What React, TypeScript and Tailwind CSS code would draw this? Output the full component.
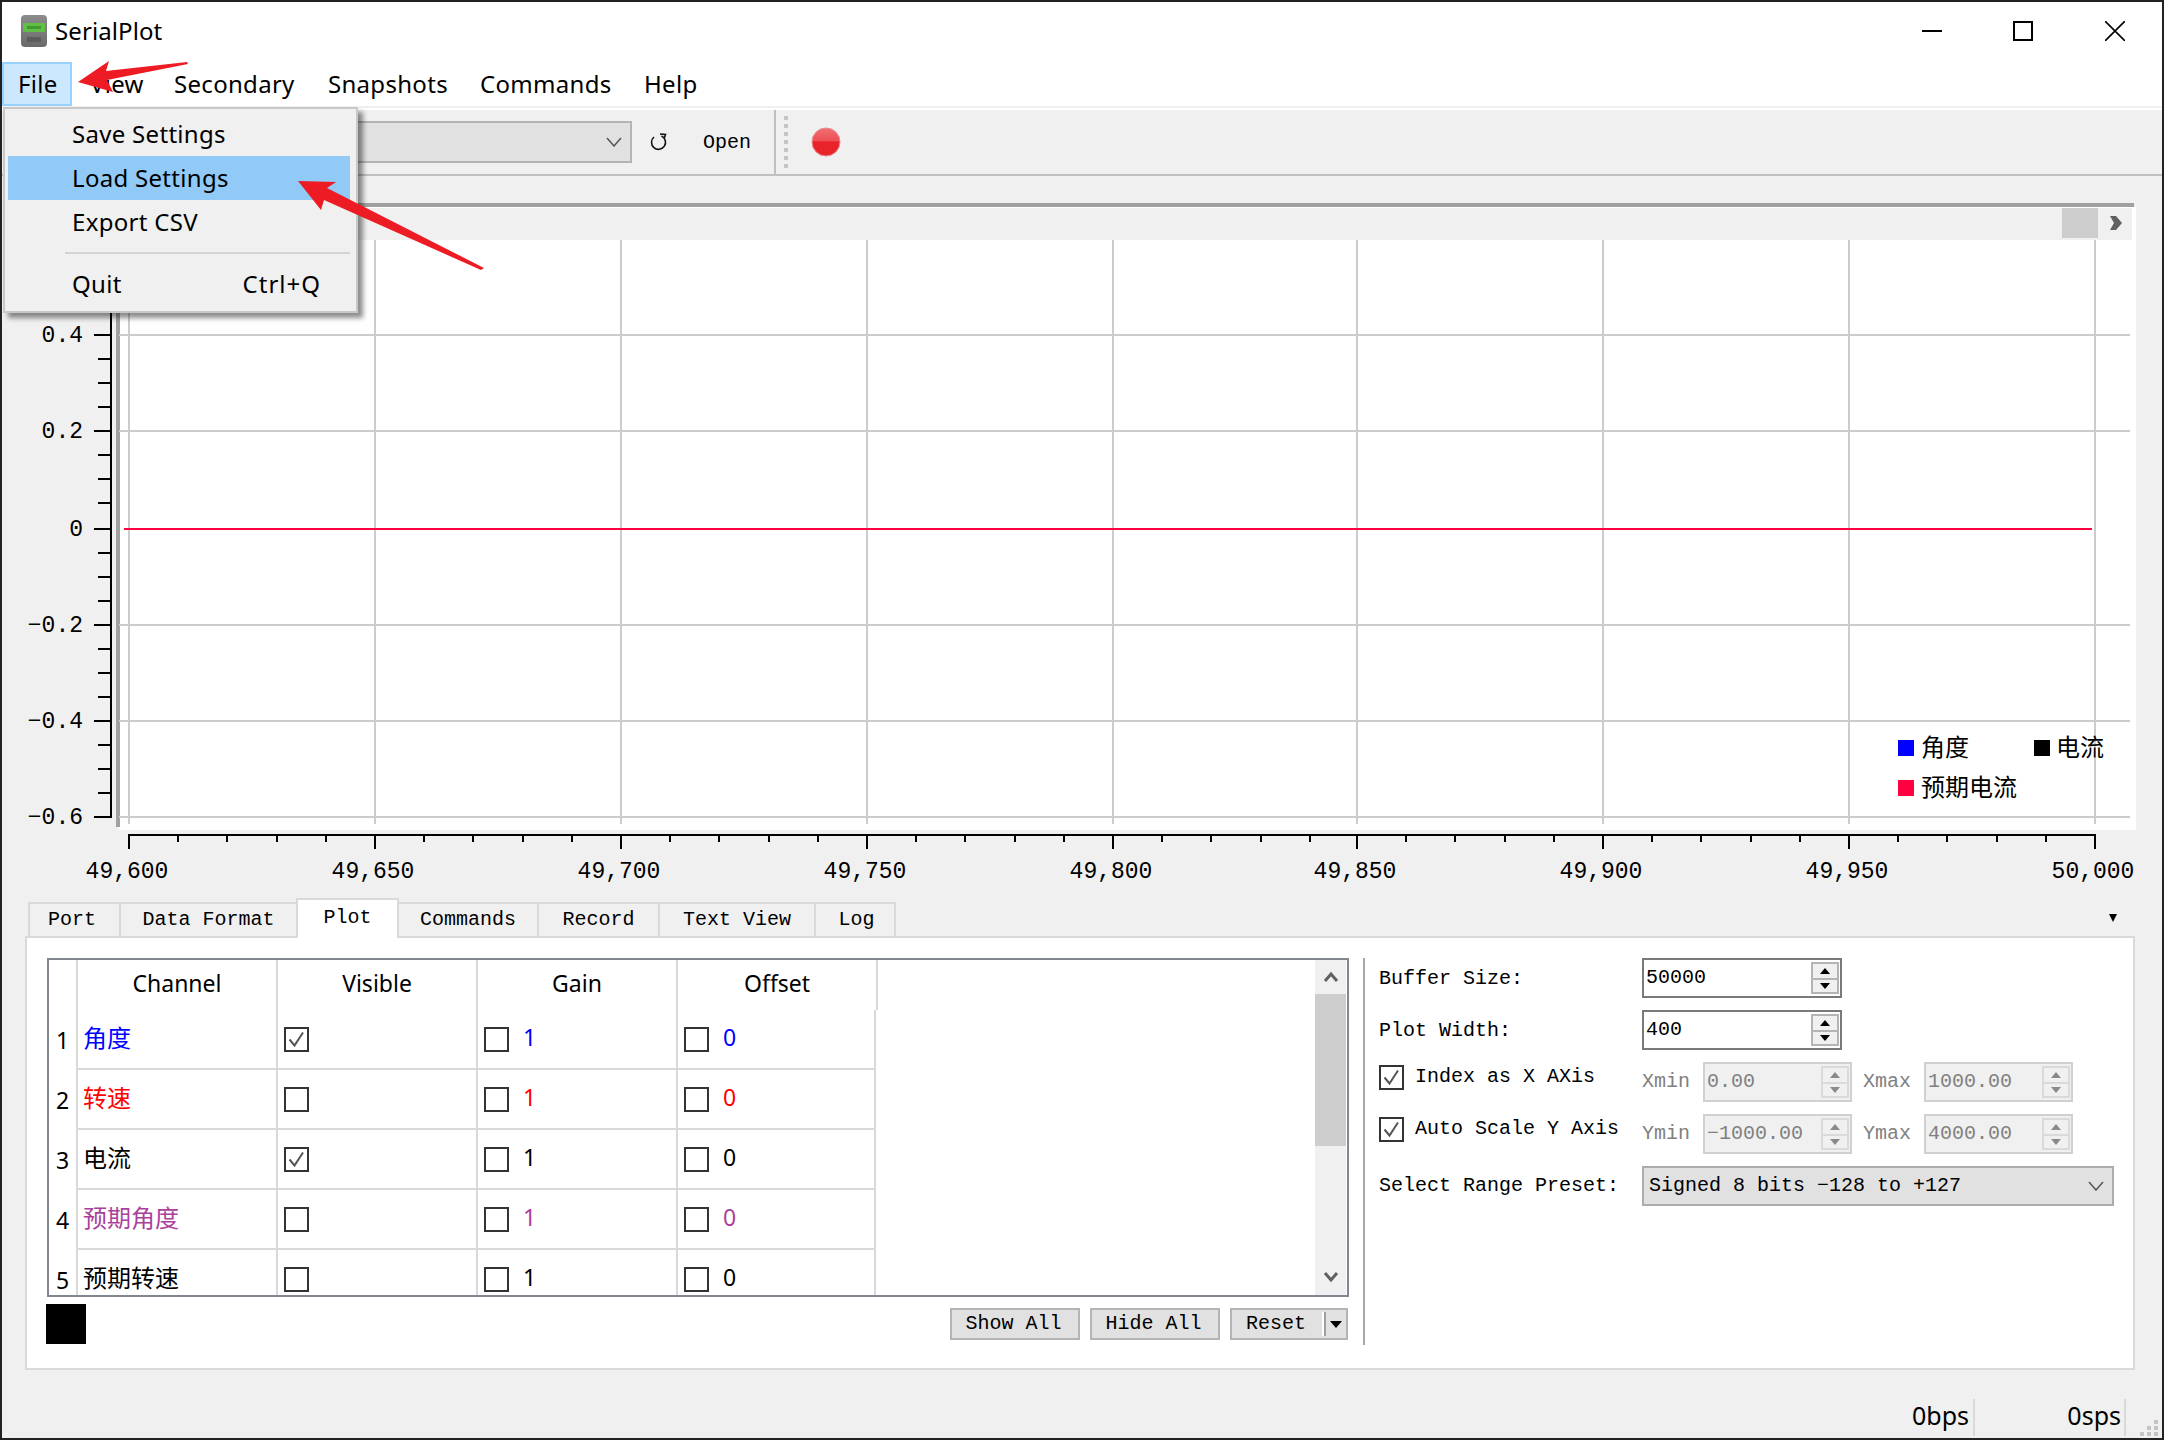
const mono = "font-['Liberation_Mono','Noto_Sans_CJK_SC',monospace] text-[20px]";

const xTicks = [129, 375, 621, 867, 1113, 1357, 1603, 1849, 2095];
const xLabels = ["49,600", "49,650", "49,700", "49,750", "49,800", "49,850", "49,900", "49,950", "50,000"];
const yMajor = [
	{ y: 335, t: "0.4" },
	{ y: 431, t: "0.2" },
	{ y: 529, t: "0" },
	{ y: 625, t: "−0.2" },
	{ y: 721, t: "−0.4" },
	{ y: 817, t: "−0.6" },
];

const channels = [
	{ n: 1, name: "角度", color: "text-[#0000ff]", on: true },
	{ n: 2, name: "转速", color: "text-[#ff0000]", on: false },
	{ n: 3, name: "电流", color: "text-black", on: true },
	{ n: 4, name: "预期角度", color: "text-[#aa3f9c]", on: false },
	{ n: 5, name: "预期转速", color: "text-black", on: false },
];

function Check({ on }: { on?: boolean }) {
	return (
		<span className="flex h-[25px] w-[25px] shrink-0 items-center justify-center border-2 border-[#333333] bg-white">
			{on && (
				<svg width="19" height="19" viewBox="0 0 19 19" fill="none">
					<path d="M2.5 9.5 L7.5 15.5 L16 2.5" stroke="#555555" strokeWidth="2" />
				</svg>
			)}
		</span>
	);
}

function Spin({ value, width, off }: { value: string; width: string; off?: boolean }) {
	const arrow = off ? "#8a8a8a" : "#000000";
	return (
		<div
			className={`flex h-10 items-center justify-between border-2 pl-[2px] pr-[1px] ${width} ${
				off ? "border-[#d0d0d0] bg-[#f0f0f0] text-[#808080]" : "border-[#7a7a7a] bg-white text-black"
			}`}
		>
			<span>{value}</span>
			<span
				className={`flex h-8 w-7 flex-col border-2 bg-[#f0f0f0] ${off ? "border-[#dadada]" : "border-[#b4b4b4]"}`}
			>
				<span className="flex h-1/2 items-center justify-center">
					<svg width="10" height="6"><path d="M5 0 L10 6 H0 Z" fill={arrow} /></svg>
				</span>
				<span
					className={`flex h-1/2 items-center justify-center border-t-2 ${off ? "border-[#dadada]" : "border-[#b4b4b4]"}`}
				>
					<svg width="10" height="6"><path d="M0 0 H10 L5 6 Z" fill={arrow} /></svg>
				</span>
			</span>
		</div>
	);
}

function Chevron({ color = "#555555" }: { color?: string }) {
	return (
		<svg width="16" height="10" viewBox="0 0 16 10" fill="none">
			<path d="M1 1 L8 9 L15 1" stroke={color} strokeWidth="1.5" />
		</svg>
	);
}

function Chart() {
	return (
		<svg width="2160" height="695" viewBox="2 203 2160 695" className="block shrink-0">
			<rect x="119" y="207" width="2017" height="623" fill="#ffffff" />
			<rect x="116" y="203" width="2018" height="4" fill="#a0a0a0" />
			<rect x="116" y="203" width="4" height="624" fill="#a0a0a0" />
			<rect x="120" y="208" width="2012" height="32" fill="#f0f0f0" />
			<rect x="2062" y="208" width="36" height="30" fill="#cdcdcd" />
			<path d="M2110 216 L2116 216 L2122 223 L2116 230 L2110 230 L2114 223 Z" fill="#606060" />

			{xTicks.map((x) => (
				<rect key={x} x={x - 1} y="240" width="2" height="584" fill="#cccccc" />
			))}
			{yMajor.map((m) => (
				m.t !== "0" && <rect key={m.t} x="119" y={m.y - 1} width="2011" height="2" fill="#cccccc" />
			))}
			<rect x="124" y="528" width="1968" height="2" fill="#ff0040" />

			<rect x="110" y="240" width="2" height="578" fill="#000000" />
			{yMajor.map((m) => (
				<g key={m.t}>
					<rect x="94" y={m.y - 1} width="17" height="2" fill="#000000" />
					<text
						x="83"
						y={m.y + 7}
						textAnchor="end"
						className="font-['Liberation_Mono',monospace] text-[23px]"
						fill="#000000"
					>
						{m.t}
					</text>
				</g>
			))}
			{[263, 287, 311, 359, 383, 407, 455, 479, 503, 553, 577, 601, 649, 673, 697, 745, 769, 793].map((y) => (
				<rect key={y} x="98" y={y - 1} width="13" height="2" fill="#000000" />
			))}

			<rect x="128" y="834" width="1968" height="2" fill="#000000" />
			{xTicks.map((x, i) => (
				<g key={x}>
					<rect x={x - 1} y="834" width="2" height="15" fill="#000000" />
					<text
						x={x - 2}
						y="878"
						textAnchor="middle"
						className="font-['Liberation_Mono',monospace] text-[23px]"
						fill="#000000"
					>
						{xLabels[i]}
					</text>
				</g>
			))}
			{xTicks.slice(0, -1).flatMap((x) =>
				[49, 98, 148, 197].map((d) => <rect key={x + d} x={x + d - 1} y="834" width="2" height="8" fill="#000000" />),
			)}

			<rect x="1898" y="740" width="16" height="16" fill="#0000ff" />
			<rect x="2034" y="740" width="16" height="16" fill="#000000" />
			<rect x="1898" y="780" width="16" height="16" fill="#ff0040" />
			<g className="font-['Noto_Sans_CJK_SC',sans-serif] text-[24px]" fill="#000000">
				<text x="1921" y="756">角度</text>
				<text x="2056" y="756">电流</text>
				<text x="1921" y="796">预期电流</text>
			</g>
		</svg>
	);
}

export default function App() {
	return (
		<div className="relative flex h-[1440px] w-[2164px] flex-col overflow-hidden border-2 border-[#222222] bg-[#f0f0f0] font-['Noto_Sans','Noto_Sans_CJK_SC',sans-serif] text-black">
			{/* title bar */}
			<div className="flex h-[60px] shrink-0 items-center bg-white pb-[2px] pl-[19px]">
				<svg width="26" height="32" viewBox="0 0 26 32" className="shrink-0">
					<defs>
						<linearGradient id="logoBody" x1="0" y1="0" x2="0" y2="1">
							<stop offset="0" stopColor="#8c8c8c" />
							<stop offset="1" stopColor="#6a6a6a" />
						</linearGradient>
					</defs>
					<rect width="26" height="32" rx="4" fill="url(#logoBody)" />
					<rect x="2" y="8" width="22" height="9" rx="1" fill="#62bf45" />
					<rect x="6" y="11" width="14" height="3" fill="#3f9a30" />
					<rect x="6" y="22" width="14" height="5" fill="#5c5c5c" />
				</svg>
				<span className="ml-[8px] text-[24px] tracking-[0.1px]">SerialPlot</span>
				<div className="ml-auto flex items-center">
					<span className="flex w-[91px] justify-center">
						<svg width="20" height="20"><rect y="9" width="20" height="2" fill="#000000" /></svg>
					</span>
					<span className="flex w-[91px] justify-center">
						<svg width="20" height="20"><rect x="1" y="1" width="18" height="18" fill="none" stroke="#000000" strokeWidth="2" /></svg>
					</span>
					<span className="flex w-[94px] justify-center">
						<svg width="20" height="20"><path d="M0 0 L20 20 M20 0 L0 20" stroke="#000000" strokeWidth="1.6" /></svg>
					</span>
				</div>
			</div>

			{/* menu bar */}
			<div className="flex h-[44px] shrink-0 items-center bg-white text-[24px] tracking-[0.3px]">
				<div className="flex h-full w-[70px] items-center border-2 border-[#99d1ff] bg-[#cce8ff] pl-[14px]">File</div>
				<div className="w-[86px] pl-[18px]">View</div>
				<div className="w-[154px] pl-[16px]">Secondary</div>
				<div className="w-[152px] pl-[16px]">Snapshots</div>
				<div className="w-[164px] pl-[16px]">Commands</div>
				<div className="pl-[16px]">Help</div>
			</div>
			<div className="h-[2px] shrink-0 bg-[#f0f0f0]" />
			<div className="h-[2px] shrink-0 bg-white" />

			{/* toolbar */}
			<div className={`flex h-[66px] shrink-0 items-center border-b-2 border-[#c0c0c0] ${mono}`}>
				<div className="ml-[198px] flex h-[42px] w-[432px] items-center justify-end border-2 border-[#b4b4b4] bg-[#e1e1e1] pr-[8px]">
					<Chevron />
				</div>
				<svg width="20" height="20" viewBox="0 0 20 20" fill="none" className="ml-[17px]">
					<path d="M12.5 4 A7 7 0 1 1 5 5 M11 2 L16.5 2.5 L15 7" stroke="#111111" strokeWidth="1.6" />
				</svg>
				<span className="ml-[34px] w-[48px] pt-[2px]">Open</span>
				<div className="ml-[23px] h-full w-[2px] bg-[#c0c0c0]" />
				<div className="ml-[8px] flex flex-col gap-[4px]">
					{[0, 1, 2, 3, 4, 5, 6].map((i) => (
						<span key={i} className="h-1 w-1 bg-[#c4c4c4]" />
					))}
				</div>
				<svg width="30" height="30" viewBox="0 0 30 30" className="ml-[23px]">
					<defs>
						<linearGradient id="rec" x1="0" y1="0" x2="0" y2="1">
							<stop offset="0" stopColor="#ef7074" />
							<stop offset="0.45" stopColor="#ee5055" />
							<stop offset="0.5" stopColor="#e8232a" />
							<stop offset="1" stopColor="#e8232a" />
						</linearGradient>
					</defs>
					<circle cx="15" cy="15" r="14" fill="url(#rec)" stroke="#e98a8c" strokeWidth="1" />
				</svg>
			</div>

			<div className="h-[27px] shrink-0" />
			<Chart />

			{/* tabs */}
			<div className={`relative flex h-[38px] shrink-0 items-end pl-[26px] ${mono}`}>
				{[
					["Port", "w-[91px] pr-[5px]"],
					["Data Format", "w-[177px]"],
				].map(([t, w]) => (
					<div key={t} className={`flex h-[34px] items-center justify-center border-2 border-b-0 border-r-0 border-[#d9d9d9] ${w}`}>{t}</div>
				))}
				<div className="z-10 -mb-[2px] flex h-10 w-[103px] items-start justify-center border-2 border-b-0 border-[#d9d9d9] bg-white pt-[3px]">Plot</div>
				{[
					["Commands", "w-[140px]"],
					["Record", "w-[121px]"],
					["Text View", "w-[156px]"],
				].map(([t, w]) => (
					<div key={t} className={`flex h-[34px] items-center justify-center border-t-2 border-r-2 border-[#d9d9d9] ${w}`}>{t}</div>
				))}
				<div className="flex h-[34px] w-[80px] items-center justify-center border-t-2 border-r-2 border-[#d9d9d9] pl-[3px]">Log</div>
				<svg width="8" height="8" className="absolute left-[2107px] top-[16px]"><path d="M0 0 H8 L4 8 Z" fill="#000000" /></svg>
			</div>

			{/* tab page */}
			<div className="ml-[23px] flex h-[434px] w-[2110px] shrink-0 border-2 border-[#d9d9d9] bg-white pl-5 pt-5">
				<div className="flex w-[1302px] shrink-0 flex-col">
					<div className="flex h-[339px] overflow-hidden border-2 border-[#82878f]">
						<div className="flex-1 text-[23px]">
							<div className="flex h-[50px] pl-[27px]">
								{["Channel", "Visible", "Gain", "Offset"].map((h) => (
									<div key={h} className="flex w-[200px] items-center justify-center border-l-2 border-[#d9d9d9] pb-[3px]">{h}</div>
								))}
								<div className="border-l-2 border-[#d9d9d9]" />
							</div>
							{channels.map((c) => (
								<div key={c.n} className={`flex h-[60px] ${c.color}`}>
									<div className="flex w-[27px] items-center justify-center text-black">{c.n}</div>
									<div className="flex w-[200px] items-center border-b-2 border-l-2 border-[#d9d9d9] pb-[4px] pl-[5px] font-['Noto_Sans_CJK_SC',sans-serif] text-[24px]">{c.name}</div>
									<div className="flex w-[200px] items-center border-b-2 border-l-2 border-[#d9d9d9] pl-[6px]">
										<Check on={c.on} />
									</div>
									<div className="flex w-[200px] items-center gap-[14px] border-b-2 border-l-2 border-[#d9d9d9] pl-[6px]">
										<Check />
										<span className="-translate-y-[2px]">1</span>
									</div>
									<div className="flex w-[200px] items-center gap-[14px] border-x-2 border-b-2 border-[#d9d9d9] pl-[6px]">
										<Check />
										<span className="-translate-y-[2px]">0</span>
									</div>
								</div>
							))}
						</div>
						<div className="mr-[1px] flex w-[31px] shrink-0 flex-col bg-[#f0f0f0]">
							<div className="flex h-[34px] items-center justify-center">
								<svg width="16" height="12" viewBox="0 0 16 12" fill="none"><path d="M2 10 L8 3 L14 10" stroke="#606060" strokeWidth="3" /></svg>
							</div>
							<div className="h-[152px] bg-[#cdcdcd]" />
							<div className="flex-1" />
							<div className="flex h-[36px] items-center justify-center">
								<svg width="16" height="12" viewBox="0 0 16 12" fill="none"><path d="M2 2 L8 9 L14 2" stroke="#606060" strokeWidth="3" /></svg>
							</div>
						</div>
					</div>
					<div className={`mt-[7px] flex h-10 items-center justify-between pr-[1px] ${mono}`}>
						<div className="-ml-[1px] h-10 w-10 bg-black" />
						<div className="flex h-8 gap-[10px]">
							<div className="flex w-[130px] items-center justify-center border-2 border-[#b4b4b4] bg-[#e1e1e1] pr-[3px]">Show All</div>
							<div className="flex w-[130px] items-center justify-center border-2 border-[#b4b4b4] bg-[#e1e1e1] pr-[3px]">Hide All</div>
							<div className="flex w-[118px] items-center border-2 border-[#b4b4b4] bg-[#e1e1e1]">
								<span className="w-[90px] pl-[14px]">Reset</span>
								<span className="h-6 w-[2px] bg-white" />
								<span className="h-6 w-[2px] bg-[#a0a0a0]" />
								<span className="flex flex-1 justify-center">
									<svg width="12" height="7"><path d="M0 0 H12 L6 7 Z" fill="#000000" /></svg>
								</span>
							</div>
						</div>
					</div>
				</div>

				<div className="ml-[14px] h-[387px] w-[2px] shrink-0 bg-[#a8a8a8]" />

				<div className={`ml-[14px] flex flex-col gap-3 ${mono}`}>
					<div className="flex h-10 items-center">
						<span className="w-[263px] pt-[1px]">Buffer Size:</span>
						<Spin value="50000" width="w-[200px]" />
					</div>
					<div className="flex h-10 items-center">
						<span className="w-[263px] pt-[1px]">Plot Width:</span>
						<Spin value="400" width="w-[200px]" />
					</div>
					<div className="flex h-10 items-center">
						<div className="mb-[10px] flex w-[263px] items-center gap-[11px]">
							<Check on />
							<span>Index as X AXis</span>
						</div>
						<span className="w-[61px] text-[#808080]">Xmin</span>
						<Spin value="0.00" width="w-[149px]" off />
						<span className="ml-[11px] w-[61px] text-[#808080]">Xmax</span>
						<Spin value="1000.00" width="w-[149px]" off />
					</div>
					<div className="flex h-10 items-center">
						<div className="mb-[10px] flex w-[263px] items-center gap-[11px]">
							<Check on />
							<span>Auto Scale Y Axis</span>
						</div>
						<span className="w-[61px] text-[#808080]">Ymin</span>
						<Spin value="−1000.00" width="w-[149px]" off />
						<span className="ml-[11px] w-[61px] text-[#808080]">Ymax</span>
						<Spin value="4000.00" width="w-[149px]" off />
					</div>
					<div className="flex h-10 items-center">
						<span className="w-[263px]">Select Range Preset:</span>
						<div className="flex h-10 w-[472px] items-center justify-between border-2 border-[#adadad] bg-[#e1e1e1] pl-[5px] pr-[8px]">
							<span>Signed 8 bits −128 to +127</span>
							<Chevron />
						</div>
					</div>
				</div>
			</div>

			{/* status bar */}
			<div className="flex flex-1 items-end justify-end pb-[2px] text-[25px]">
				<div className="flex h-[37px] w-[151px] items-center justify-end border-r-2 border-[#d9d9d9] pb-[3px] pr-[4px]">0bps</div>
				<div className="flex h-[37px] w-[151px] items-center justify-end border-r-2 border-[#d9d9d9] pb-[3px] pr-[3px]">0sps</div>
				<div className="relative h-[37px] w-[36px]">
					<svg width="20" height="16" className="absolute bottom-0 right-[2px]">
						{[[14, 0], [7, 6], [14, 6], [0, 12], [7, 12], [14, 12]].map(([x, y]) => (
							<rect key={`${x}-${y}`} x={x} y={y} width="4" height="4" fill="#c4c4c4" />
						))}
					</svg>
				</div>
			</div>

			{/* File menu */}
			<div className="absolute left-[1px] top-[105px] flex h-[206px] w-[355px] flex-col border-2 border-[#c8c8c8] bg-[#f0f0f0] py-[3px] pl-[3px] pr-[6px] text-[24px] tracking-[0.3px] shadow-[5px_5px_5px_rgba(0,0,0,0.45)]">
				<div className="flex h-[44px] shrink-0 items-center pl-[64px]">Save Settings</div>
				<div className="flex h-[44px] shrink-0 items-center bg-[#91c9f7] pl-[64px]">Load Settings</div>
				<div className="flex h-[44px] shrink-0 items-center pl-[64px]">Export CSV</div>
				<div className="ml-[57px] mt-[8px] h-[2px] shrink-0 bg-[#d4d4d4]" />
				<div className="mt-[8px] flex h-[44px] shrink-0 items-center justify-between pl-[64px] pr-[29px]">
					<span>Quit</span>
					<span className="tracking-[1px]">Ctrl+Q</span>
				</div>
			</div>

			{/* red arrows drawn on the screenshot */}
			<svg width="520" height="290" className="pointer-events-none absolute left-[-2px] top-[-2px]">
				<polygon points="78,82 109,61 106,71 187,62 188,64 107,80 113,92" fill="#ed1c24" />
				<polygon points="298,181 336,182 327,188 484,268 481,270 324,200 321,210" fill="#ed1c24" />
			</svg>
		</div>
	);
}
